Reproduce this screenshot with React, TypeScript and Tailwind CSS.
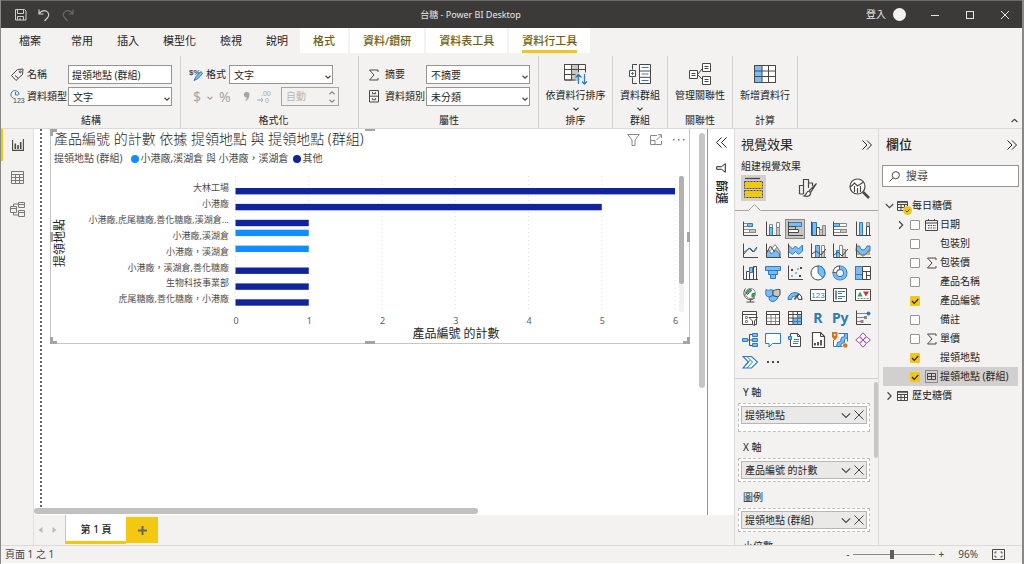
import React, { useId, useState } from "react";

const INK = "#4a4846";
const BLUE = "#2b7cc4";
const SKY = "#7dbcf0";

type SvgProps = { w?: number; h?: number; box?: string; children: React.ReactNode; className?: string };

function Svg({ w = 16, h = 16, box, children, className = "" }: SvgProps) {
  return (
    <svg
      width={w}
      height={h}
      viewBox={box ?? `0 0 ${w} ${h}`}
      fill="none"
      stroke={INK}
      strokeWidth="1"
      aria-hidden="true"
      className={`shrink-0 ${className}`}
    >
      {children}
    </svg>
  );
}

function Chevron({ className = "", w = 6, h = 4, stroke = INK }: { className?: string; w?: number; h?: number; stroke?: string }) {
  return (
    <svg width={w} height={h} viewBox="0 0 6 4" fill="none" stroke={stroke} strokeWidth="1.2" aria-hidden="true" className={`shrink-0 ${className}`}>
      <path vectorEffect="non-scaling-stroke" d="M.5 .7 3 3.1 5.5 .7" />
    </svg>
  );
}

/* ---------- title bar ---------- */

function TitleBar() {
  return (
    <header className="flex h-7 shrink-0 items-center justify-between border-t border-[#6a6a68] bg-[#3b3a38] text-[10px] text-[#e8e6e4]">
      <div className="flex items-center gap-[10px] pl-[13px]">
        <button aria-label="儲存">
          <Svg w={13} h={13}>
            <path stroke="#d0cecc" d="M1.5 1.5h9l1.500 1.500v9h-10.500zM3.500 1.500v4h6v-4M3.500 12v-3.500h6v3.500M6 10v2" />
          </Svg>
        </button>
        <button aria-label="復原">
          <Svg w={14} h={14}>
            <path stroke="#d0cecc" strokeWidth="1.2" d="M2 1.500v4.500h4.500M2 6C4 3 7 2 9.500 3.200c2.500 1.300 2.800 4.300 1.200 6.300L7.500 13" />
          </Svg>
        </button>
        <button aria-label="取消復原">
          <Svg w={14} h={14}>
            <path stroke="#6b6967" strokeWidth="1.2" d="M12 1.500v4.500H7.500M12 6C10 3 7 2 4.500 3.200c-2.500 1.300-2.800 4.300-1.200 6.300L6.500 13" />
          </Svg>
        </button>
      </div>
      <h1 className="text-[9px]">台糖 - Power BI Desktop</h1>
      <div className="flex items-center pr-3">
        <button className="flex items-center gap-[7px]">
          登入
          <span className="size-[13px] rounded-full bg-[#f3f2f1]" />
        </button>
        <button aria-label="最小化" className="ml-[24px]">
          <Svg w={10} h={10}>
            <path stroke="#e8e6e4" d="M1 5.500h8" />
          </Svg>
        </button>
        <button aria-label="最大化" className="ml-[25px]">
          <Svg w={10} h={10}>
            <rect x="1.500" y="1.500" width="7" height="7" stroke="#e8e6e4" />
          </Svg>
        </button>
        <button aria-label="關閉" className="ml-[25px]">
          <Svg w={10} h={10}>
            <path stroke="#e8e6e4" d="m1 1 8 8M9 1 1 9" />
          </Svg>
        </button>
      </div>
    </header>
  );
}

/* ---------- ribbon ---------- */

function RibbonTabs() {
  const plain = ["常用", "插入", "模型化", "檢視", "說明"];
  const context = ["格式", "資料/鑽研", "資料表工具", "資料行工具"];
  return (
    <nav className="flex h-[25px] shrink-0 text-[11px]">
      <button className="px-[18px] pt-[2px]">檔案</button>
      {plain.map((t) => (
        <button key={t} className="px-3 pt-[2px]">
          {t}
        </button>
      ))}
      <div className="flex gap-[2px]">
        {context.map((t, i) => (
          <button key={t} className="bg-white px-[13px] font-medium text-[#6f6010]">
            <span className={`flex h-full items-center border-b-3 border-t-4 border-t-transparent ${i === 3 ? "border-b-[#ebc91c]" : "border-b-transparent"}`}>{t}</span>
          </button>
        ))}
      </div>
    </nav>
  );
}

function Group({ title, className = "", children }: { title: string; className?: string; children: React.ReactNode }) {
  return (
    <section className={`mt-[3px] flex flex-col border-r border-[#d2d0ce] pt-[9px] ${className}`}>
      <div className="flex h-[53px] flex-col gap-[3px]">{children}</div>
      <h2 className="text-center leading-[15px]">{title}</h2>
    </section>
  );
}

function Select({ id, value, label, className = "" }: { id?: string; value: string; label?: string; className?: string }) {
  return (
    <span className={`relative flex h-[19px] ${className}`}>
      <select id={id} aria-label={label} className="w-full appearance-none rounded-none border border-[#979593] bg-white px-1 leading-none outline-none">
        <option>{value}</option>
      </select>
      <Chevron className="pointer-events-none absolute right-[2px] bottom-[5px]" />
    </span>
  );
}

function Field({ icon, label, labelClass, children }: { icon: React.ReactNode; label: string; labelClass: string; children: (id: string) => React.ReactNode }) {
  const id = useId();
  return (
    <div className="flex h-[19px] items-center">
      <span className="flex w-[17px] shrink-0">{icon}</span>
      <label htmlFor={id} className={`shrink-0 whitespace-nowrap ${labelClass}`}>
        {label}
      </label>
      {children(id)}
    </div>
  );
}

function BigButton({ icon, label, menu }: { icon: React.ReactNode; label: string; menu?: boolean }) {
  return (
    <button className="flex flex-col items-center whitespace-nowrap">
      <span className="-mt-[4px] flex h-[26px] items-center">{icon}</span>
      <span className="leading-[16px]">{label}</span>
      {menu && <Chevron className="mt-[4px]" />}
    </button>
  );
}

const TagIcon = (
  <Svg w={14} h={14}>
    <path d="M1.500 7.500 7.500 1.500l5.500-.5-.5 5.500L6 12.500z" />
    <circle cx="10.300" cy="3.800" r="1" />
    <path d="m5 7.500 3 2.500" />
  </Svg>
);
const TypeIcon = (
  <Svg w={15} h={15}>
    <path stroke={BLUE} d="M3.500 9.300A4 4 0 1 1 9 6M5.500 3v3h2.500" />
    <text x="3" y="13.500" fontSize="7" stroke="none" fill={INK} fontFamily="Liberation Sans, sans-serif">123</text>
  </Svg>
);
const FormatIcon = (
  <Svg w={15} h={15}>
    <text x="0" y="7.500" fontSize="8" fontWeight="700" stroke="none" fill={INK} fontFamily="Liberation Sans, sans-serif">$%</text>
    <path stroke={BLUE} fill={SKY} d="M12 4.500 7 9.500l-2 4 4-2 4.500-5z" />
  </Svg>
);
const SigmaIcon = (
  <Svg w={12} h={12}>
    <path d="M10 3v-2H1.500l4.500 5-4.500 5h8.500V9" />
  </Svg>
);
const CabinetIcon = (
  <Svg w={11} h={13}>
    <path d="M1.500.5h9v11.500h-9zM1.500 6.200h9M4.500 2.200v1.500h3v-1.500M4.500 8.200v1.500h3v-1.500" />
  </Svg>
);
const SortIcon = (
  <Svg w={25} h={24}>
    <path fill="#c8c6c4" stroke="none" d="M8 2h7v17H8z" />
    <path fill="#fff" d="M1.500 2.500h7v15.500h-7z" />
    <path d="M1.500 2.500h21v8M1.500 2.500v15.500h11M8.500 2.500v15.500M15.500 2.500v8M1.500 7.500h21M1.500 12.500h11" />
    <path stroke={BLUE} strokeWidth="1.300" d="M15.500 22v-9.500m-3 3 3-3 3 3M21.500 12v10m-2.500-2.500 2.500 2.500 2.500-2.500" />
  </Svg>
);
const GroupIcon = (
  <Svg w={24} h={22}>
    <path d="M9 1.500H4.500v5M9 20.500H4.500v-6" />
    <path fill="#fff" d="M11.500 1.500h11v19h-11zM11.500 8h11M11.500 14.300h11M1.500 7.500h6v6h-6z" />
    <path stroke={BLUE} d="M13.500 4.500h7M13.500 11h7M13.500 17.500h7M3 10.500h3M4.500 9v3" />
  </Svg>
);
const RelationIcon = (
  <Svg w={24} h={24}>
    <path fill="#fff" d="M1.500 8.500h8v8h-8zM14.500 1.500h8v8h-8zM14.500 14.500h8v8h-8z" />
    <path d="M3.500 11.500h4M3.500 13.500h4M16.500 4.500h4M16.500 6.500h4M16.500 17.500h4M16.500 19.500h4M9.500 12.500l5-6M9.500 12.500l5 5" />
  </Svg>
);
const NewColumnIcon = (
  <Svg w={24} h={20}>
    <path fill="#fff" d="M1.500 1.500h21v17h-21z" />
    <path fill={SKY} stroke="none" d="M2 2h7v16H2z" />
    <path d="M1.500 1.500h21v17h-21zM9 1.500v17M15.500 1.500v17M1.500 7h21M1.500 12.500h21" />
  </Svg>
);

function Ribbon() {
  return (
    <div className="flex h-[76px] shrink-0 overflow-hidden border-b border-[#dcdad8] text-[10px]">
      <Group title="結構" className="w-[180px] pr-2 pl-[9px]">
        <Field icon={TagIcon} label="名稱" labelClass="w-[41px]">
          {(id) => <input id={id} defaultValue="提領地點 (群組)" className="h-[19px] w-[104px] border border-[#979593] bg-white px-[3px] outline-none" />}
        </Field>
        <Field icon={TypeIcon} label="資料類型" labelClass="w-[41px]">
          {(id) => <Select id={id} value="文字" className="w-[104px]" />}
        </Field>
      </Group>

      <Group title="格式化" className="w-[178px] pl-2">
        <Field icon={FormatIcon} label="格式" labelClass="w-[23px]">
          {(id) => <Select id={id} value="文字" className="w-[104px]" />}
        </Field>
        <div className="flex h-[19px] items-center text-[14px] text-[#a8a6a4]">
          <button className="ml-1 flex w-[22px] items-center gap-[6px]">
            $<Chevron stroke="#a8a6a4" className="mt-[3px]" />
          </button>
          <button className="ml-1 w-[24px] text-left">%</button>
          <button aria-label="千分位分隔符號" className="flex w-[14px]">
            <Svg w={7} h={11}>
              <path stroke="none" fill="#a8a6a4" d="M3.500 1a2.500 2.500 0 0 1 3 2.700C6.500 7 4.500 9.500 1.500 10.500c1.500-1.500 2.200-2.800 2.200-4A2.700 2.700 0 1 1 3.500 1" />
            </Svg>
          </button>
          <button aria-label="小數位數" className="flex w-[24px]">
            <Svg w={14} h={14}>
              <text x="4" y="6" fontSize="7" stroke="none" fill="#a8a6a4" fontFamily="Liberation Sans, sans-serif">.00</text>
              <text x="8" y="13" fontSize="7" stroke="none" fill="#a8a6a4" fontFamily="Liberation Sans, sans-serif">0</text>
              <path stroke="#86b4dc" d="M0 10h6M4 8l2 2-2 2" />
            </Svg>
          </button>
          <span className="flex h-[19px] w-[58px] items-center border border-[#a8a6a4] text-[10px]">
            <input aria-label="小數位數" disabled defaultValue="自動" className="w-full min-w-0 pl-1 text-[#b8b6b4]" />
            <span className="mr-[3px] flex flex-col gap-[4px]">
              <Chevron stroke="#8a8886" className="rotate-180" />
              <Chevron stroke="#8a8886" />
            </span>
          </span>
        </div>
      </Group>

      <Group title="屬性" className="w-[180px] pr-2 pl-[9px]">
        <Field icon={SigmaIcon} label="摘要" labelClass="w-[41px]">
          {(id) => <Select id={id} value="不摘要" className="w-[105px]" />}
        </Field>
        <Field icon={CabinetIcon} label="資料類別" labelClass="w-[41px]">
          {(id) => <Select id={id} value="未分類" className="w-[105px]" />}
        </Field>
      </Group>

      <Group title="排序" className="w-[74px]">
        <BigButton icon={SortIcon} label="依資料行排序" menu />
      </Group>
      <Group title="群組" className="w-[55px]">
        <BigButton icon={GroupIcon} label="資料群組" menu />
      </Group>
      <Group title="關聯性" className="w-[65px]">
        <BigButton icon={RelationIcon} label="管理關聯性" />
      </Group>
      <Group title="計算" className="w-[65px]">
        <BigButton icon={NewColumnIcon} label="新增資料行" />
      </Group>
      <button aria-label="摺疊功能區" className="mt-auto mr-1 mb-[5px] ml-auto">
        <Chevron w={7} h={5} className="rotate-180" />
      </button>
    </div>
  );
}

/* ---------- left rail ---------- */

function Rail() {
  return (
    <nav className="flex w-[33px] shrink-0 flex-col border-r border-[#e1dfdd]">
      <button aria-label="報表" className="flex h-[32px] items-center border-l-2 border-[#f2c811] pl-[9px]">
        <Svg w={12} h={12}>
          <path strokeWidth="1.100" d="M.6 1v10.400h10.800V0" />
          <path strokeWidth="1.600" d="M3.300 4.500v5.500M6 6v4M8.700 3v7" />
        </Svg>
      </button>
      <button aria-label="資料" className="flex h-[32px] items-center pl-[10px]">
        <Svg w={13} h={13}>
          <path d="M.5.5h12v12H.5zM.5 3.500h12M.5 6.500h12M.5 9.500h12M4.500 3.500v9M8.500 3.500v9" stroke="#7a7876" />
        </Svg>
      </button>
      <button aria-label="模型" className="flex h-[32px] items-center pl-[9px]">
        <Svg w={15} h={15}>
          <path stroke="#7a7876" d="M.5 4.500h6v6h-6zM.5 6.500h6M8.500.5h6v5h-6zM8.500 2.500h6M8.500 8.500h6v6h-6zM8.500 10.500h6M3.500 4.500v-2.500h5M3.500 10.500v2.500h5" />
        </Svg>
      </button>
    </nav>
  );
}

/* ---------- report visual ---------- */

const NAVY = "#12239e";
const AZURE = "#118dff";
const rows = [
  { label: "大林工場", value: 6, group: 1 },
  { label: "小港廠", value: 5, group: 1 },
  { label: "小港廠,虎尾糖廠,善化糖廠,溪湖倉...", value: 1, group: 1 },
  { label: "小港廠,溪湖倉", value: 1, group: 0 },
  { label: "小港廠，溪湖倉", value: 1, group: 0 },
  { label: "小港廠，溪湖倉,善化糖廠", value: 1, group: 1 },
  { label: "生物科技事業部", value: 1, group: 1 },
  { label: "虎尾糖廠,善化糖廠，小港廠", value: 1, group: 1 },
];
const UNIT = 73.25;

function BarChart() {
  return (
    <svg viewBox="0 0 638 174" className="block w-full" role="img" aria-label="產品編號 的計數">
      {[0, 1, 2, 3, 4, 5, 6].map((n) => (
        <g key={n}>
          <line x1={184.500 + n * UNIT} x2={184.500 + n * UNIT} y1="9" y2="144" stroke="#dedede" strokeDasharray="1 3" />
          <text x={185 + n * UNIT} y="157" textAnchor="middle" fontSize="9" fill="#605e5c">
            {n}
          </text>
        </g>
      ))}
      {rows.map((r, i) => (
        <g key={r.label}>
          <text x="178" y={24 + i * 15.900} textAnchor="end" fontSize="9" fill="#4e4c4a">
            {r.label}
          </text>
          <rect x="184.500" y={(r.group ? 21 : 15) + i * 15.900} width={r.value * UNIT} height="6.400" fill={r.group ? NAVY : AZURE} />
        </g>
      ))}
      <rect x="628" y="9" width="5" height="136" rx="2" fill="#f1f0ef" />
      <rect x="628" y="9" width="5" height="108" rx="2" fill="#b3b2b1" />
      <text x="405" y="171" textAnchor="middle" fontSize="12" fill="#252423">
        產品編號 的計數
      </text>
      <text transform="translate(13 76) rotate(-90)" textAnchor="middle" fontSize="12" fill="#252423">
        提領地點
      </text>
    </svg>
  );
}

function Visual() {
  return (
    <article className="relative ml-[8px] w-[640px] border border-t-0 border-[#c8c6c4] pb-[2px]">
      <span className="absolute top-0 -left-px size-[7px] border-t-3 border-l-3 border-[#a6a4a2]" />
      <span className="absolute top-0 left-1/2 h-[2px] w-[10px] -translate-x-1/2 bg-[#a6a4a2]" />
      <span className="absolute -bottom-px left-1/2 h-[3px] w-[10px] -translate-x-1/2 bg-[#a6a4a2]" />
      <span className="absolute -bottom-px -left-px size-[7px] border-b-3 border-l-3 border-[#a6a4a2]" />
      <span className="absolute -right-px -bottom-px size-[7px] border-r-3 border-b-3 border-[#a6a4a2]" />
      <span className="absolute top-[103px] -left-px h-[10px] w-[3px] bg-[#a6a4a2]" />
      <span className="absolute top-[103px] -right-px h-[10px] w-[3px] bg-[#a6a4a2]" />
      <div className="flex h-[20px] items-start justify-between pr-1 pl-[3px]">
        <h2 className="text-[14px] leading-[19px] font-light text-[#252423]">產品編號 的計數 依據 提領地點 與 提領地點 (群組)</h2>
        <div className="flex items-center gap-[10px] pt-[5px]">
          <button aria-label="篩選">
            <Svg w={13} h={12}>
              <path stroke="#8a8886" d="M.7.5h11.600L8 6v5.500H5V6z" />
            </Svg>
          </button>
          <button aria-label="焦點模式">
            <Svg w={12} h={12}>
              <path stroke="#8a8886" d="M7 1.500H.5v9h11V7M.5 6.500h4.500v4M6.500 6l5-5M8 .7h3.500v3.500" />
            </Svg>
          </button>
          <button aria-label="更多選項">
            <Svg w={13} h={12}>
              <path stroke="none" fill="#7a7876" d="M1 5h1.500v1.500H1zM6 5h1.500v1.500H6zM11 5h1.500v1.500H11z" />
            </Svg>
          </button>
        </div>
      </div>
      <div className="flex h-[18px] items-center pt-px pl-[3px] text-[10px] text-[#4e4c4a]">
        <span className="mr-2">提領地點 (群組)</span>
        <span className="mr-[2px] size-2 rounded-full bg-[#118dff]" />
        <span className="mr-1">小港廠,溪湖倉 與 小港廠，溪湖倉</span>
        <span className="mr-[2px] size-2 rounded-full bg-[#12239e]" />
        <span>其他</span>
      </div>
      <BarChart />
    </article>
  );
}

function Canvas() {
  return (
    <div className="flex min-h-0 flex-1 bg-white">
      <main className="flex min-w-0 flex-1 flex-col">
        <div className="flex min-h-0 flex-1">
          <div className="min-w-0 flex-1 overflow-hidden pl-[6px]">
            <div className="h-full overflow-hidden border-l-2 border-dotted border-[#6a6866]">
              <Visual />
            </div>
          </div>
          <div className="w-[8px] shrink-0 pt-[4px]">
            <div className="h-[255px] w-[6px] rounded-full bg-[#c8c6c4]" />
          </div>
        </div>
        <div className="h-[8px] shrink-0 pt-px">
          <div className="h-[6px] w-[66%] rounded-full bg-[#c2c0be]" />
        </div>
      </main>
      <aside className="flex w-[27px] shrink-0 flex-col items-center border-l border-[#979593] pt-[8px]">
        <button aria-label="展開窗格">
          <Svg w={11} h={11}>
            <path stroke="#252423" d="M5.500.5l-5 5 5 5M10.500.5l-5 5 5 5" />
          </Svg>
        </button>
        <Svg w={10} h={10} className="mt-[15px]">
          <path stroke="#252423" d="M9.300.7v8.600L5.500 6.300H.7V3.700h4.800z" />
        </Svg>
        <h2 className="mt-[7px] text-[12px] leading-[16px] font-medium [text-orientation:sideways] [writing-mode:vertical-rl]">篩選</h2>
      </aside>
    </div>
  );
}

function PageTabs() {
  return (
    <div className="flex h-[30px] shrink-0 text-[10px]">
      <div className="flex w-[31px] items-center justify-around pr-1">
        <button aria-label="上一頁">
          <Svg w={5} h={6}>
            <path stroke="none" fill="#bdbbb9" d="M4.500 0v6L.5 3z" />
          </Svg>
        </button>
        <button aria-label="下一頁">
          <Svg w={5} h={6}>
            <path stroke="none" fill="#bdbbb9" d="M.5 0v6l4-3z" />
          </Svg>
        </button>
      </div>
      <button className="mb-px w-[61px] border-b-3 border-l border-b-[#f2c811] border-l-[#c8c6c4] bg-white pt-[2px] font-medium">第 1 頁</button>
      <button aria-label="新增頁面" className="mt-[2px] mb-[2px] flex w-[32px] items-center justify-center bg-[#f2c811]">
        <Svg w={9} h={9}>
          <path stroke="#66655f" strokeWidth="2" d="M4.500 0v9M0 4.500h9" />
        </Svg>
      </button>
    </div>
  );
}

/* ---------- visualizations pane ---------- */

function Axes() {
  return <path d="M1.500.5v14H16" />;
}

const GREY = "#c8c6c4";
const MID = "#8a8886";
const textIcon = "text-[14px] leading-[16px] font-bold text-[#2b7cb4]";

const visuals: { name: string; art: React.ReactNode }[] = [
  { name: "堆疊橫條圖", art: <Svg><path fill="#fff" stroke={MID} d="M1.500 8.500h12v3h-12z" /><path fill={GREY} stroke={MID} d="M7.500 8.500h6v3h-6z" /><path fill={SKY} stroke={BLUE} d="M5.500 2.500h5v3h-5z" /><path stroke={MID} d="M1.500 2.500h4M1.500 5.500h4" /><Axes /></Svg> },
  { name: "堆疊直條圖", art: <Svg><path fill="#fff" stroke={MID} d="M4.500 3.500h3v11h-3zM11.500 1.500h3v13h-3z" /><path fill={GREY} stroke={MID} d="M11.500 6.500h3v8h-3z" /><path fill={SKY} stroke={BLUE} d="M4.500 6.500h3v8h-3z" /><Axes /></Svg> },
  { name: "群組橫條圖", art: <Svg><path fill={SKY} stroke={BLUE} d="M1.500 1.500h13v4h-13z" /><path fill={GREY} d="M1.500 5.500h7v3h-7z" /><path fill="#fff" d="M1.500 8.500h10v3h-10z" /><Axes /></Svg> },
  { name: "群組直條圖", art: <Svg><path fill={SKY} stroke={BLUE} d="M2.500 1.500h4v13h-4z" /><path fill="#fff" d="M6.500 6.500h3v8h-3z" /><path fill={GREY} stroke={MID} d="M9.500 8.500h3v6h-3zM12.500 4.500h3v10h-3z" /><Axes /></Svg> },
  { name: "100% 堆疊橫條圖", art: <Svg><path fill="#fff" stroke={MID} d="M1.500 2.500h13v3h-13z" /><path fill={SKY} stroke={BLUE} d="M1.500 2.500h6v3h-6z" /><path fill="#fff" stroke={MID} d="M1.500 8.500h13v3h-13z" /><path fill={GREY} stroke={MID} d="M8.500 8.500h6v3h-6z" /><Axes /></Svg> },
  { name: "100% 堆疊直條圖", art: <Svg><path fill={SKY} stroke={BLUE} d="M4.500 1.500h3v13h-3z" /><path fill={GREY} stroke={MID} d="M11.500 1.500h3v4h-3z" /><path fill="#fff" stroke={INK} d="M11.500 5.500h3v9h-3z" /><Axes /></Svg> },

  { name: "折線圖", art: <Svg><path d="m2 11 5-6 4 4 4-5" /><path stroke={BLUE} d="m2 9 3-2 3-2 4 4 3-4" /><Axes /></Svg> },
  { name: "區域圖", art: <Svg><path fill="#fff" stroke={MID} d="m5 8 5-6.500 5 7v6H2z" /><path fill={GREY} stroke={MID} d="m9 8 3-4 3 5v5.500h-4z" /><path fill={SKY} stroke={BLUE} d="m1.500 9 2-2 3 4 4-4 4 4v3.500h-13z" /><path d="m1.500 10 4-7 4 6" /><Axes /></Svg> },
  { name: "堆疊區域圖", art: <Svg><path fill={SKY} stroke={BLUE} d="m1.500 2 4 4 3-3 3 3 4-4v6l-4 3.500-3-3-3 3-4-3z" /><Axes /></Svg> },
  { name: "折線與堆疊直條圖", art: <Svg><path fill="#fff" stroke={MID} d="M11.500 2.500h3v12h-3z" /><path fill={SKY} stroke={BLUE} d="M5.500 2.500h4v12h-4z" /><path fill={GREY} stroke={MID} d="M11.500 8.500h3v6h-3z" /><path d="m2 11 4-3 5 4 5-6" /><Axes /></Svg> },
  { name: "折線與群組直條圖", art: <Svg><path fill={SKY} stroke={BLUE} d="M4.500 7.500h3v7h-3z" /><path fill="#fff" stroke={MID} d="M7.500 2.500h3v12h-3z" /><path fill={GREY} stroke={MID} d="M10.500 6.500h3v8h-3z" /><path d="m2 12 4-3 4 4 6-7" /><Axes /></Svg> },
  { name: "緞帶圖", art: <Svg><path fill="#e8a34a" stroke="none" d="M2 8h3l3 3 3-3h4v4h-4l-3 2-3-2H2z" /><path fill={SKY} stroke={BLUE} d="M1.500 3h3c1 3 2 4 3.500 4s2.500-1 4-4h3v5h-2c-1.500 3-3 4-5 4s-3.500-1-5-4h-2z" /><Axes /></Svg> },

  { name: "瀑布圖", art: <Svg><path fill="#fff" stroke={INK} d="M4.500 6.500h3v8h-3zM11.500 1.500h3v13h-3z" /><path fill={SKY} stroke={BLUE} d="M7.500 2.500h3v5h-3z" /><path d="M10.500 2.500h2" /><Axes /></Svg> },
  { name: "漏斗圖", art: <Svg><path fill={SKY} stroke={BLUE} d="M.5 1.500h15v4H.5zM3.500 5.500h9v4h-9zM5.500 9.500h5v4h-5z" /></Svg> },
  { name: "散佈圖", art: <Svg><Axes /><path stroke="none" fill={SKY} d="M4 10h2v2H4zM8 7h2v2H8zM10 3h2v2h-2z" /><path stroke="none" fill={INK} d="M4 4h2v2H4zM12 10h2v2h-2zM13 2h2v2h-2z" /></Svg> },
  { name: "圓形圖", art: <Svg><circle cx="8" cy="8" r="7" fill="#fff" stroke={INK} /><path fill={SKY} stroke={BLUE} d="M8 1v7l4.800 5A7 7 0 0 0 8 1" /></Svg> },
  { name: "環圈圖", art: <Svg><circle cx="8" cy="8" r="5.300" stroke={BLUE} strokeWidth="4.500" /><circle cx="8" cy="8" r="5.300" stroke={SKY} strokeWidth="2.800" /><path stroke="#5c5a58" strokeWidth="4.500" d="M2.700 8A5.300 5.300 0 0 1 8 2.700" /><path stroke="#fff" strokeWidth="2.600" d="M2.800 7A5.300 5.300 0 0 1 7 2.800" /></Svg> },
  { name: "樹狀圖", art: <Svg><path fill="#fff" d="M.5 1.500h15v13H.5z" /><path fill={SKY} stroke={BLUE} d="M.5 1.500h7v13h-7z" /><path stroke={BLUE} d="M.5 9.500h7" /><path d="M7.500 1.500v13M7.500 6.500h8M11.500 6.500v8M11.500 10.500h4" /></Svg> },

  { name: "地圖", art: <Svg><circle cx="8.500" cy="6.500" r="5" fill="#fff" stroke={MID} /><path fill="#5aa878" stroke="#2f7d4f" d="M5.500 3.500 8.500 2l1 2-2 1.500-2 2-1.300-1.500zM10 7l2.500-1-.5 3-2 1z" /><path d="M3.500 1.500C1 5 1.500 9 4.500 11.500c3 2 6 1.500 8.500-1M8.500 12.500V15M4.500 15h8" /></Svg> },
  { name: "區域分布圖", art: <Svg><path fill={SKY} stroke={BLUE} d="M1 2.500c2 1 3 1 5 0l2 1v5l-4 1.500-2.500-1C.5 7 .5 5 1 2.500zM4 10l4-1.500 5 1.500c-1 3-3 4.500-6 4.500-2 0-3-2-3-4.500z" /><path fill={GREY} stroke={INK} d="M8 3.500c2 0 3-1.500 7-1v5c-1 1-1 2-2 2.500L8 8.500z" /></Svg> },
  { name: "量測計", art: <Svg><path fill={SKY} stroke={BLUE} d="M1 12.500a7 7 0 0 1 14 0h-3.500a3.500 3.500 0 0 0-7 0z" /><path fill="#fff" stroke={INK} d="M12 6.800a7 7 0 0 1 3 5.700h-3.500a4 4 0 0 0-1.200-2.700z" /><path strokeWidth="1.500" d="m7.500 12.500 3.500-5" /></Svg> },
  { name: "卡片", art: <Svg><path fill="#fff" d="M.5 2.500h15v11H.5z" /><text x="8" y="10.500" fontSize="8" textAnchor="middle" stroke="none" fill={BLUE} fontFamily="Liberation Sans, sans-serif">123</text></Svg> },
  { name: "多列卡片", art: <Svg><path fill="#fff" d="M1.500 1.500h13v13h-13z" /><path stroke={BLUE} d="M6 4.500h7M6 6.500h4M6 9.500h7M6 11.500h4" /><path d="M4 3.500v9" strokeWidth="1.300" /></Svg> },
  { name: "KPI", art: <Svg><path fill="#fff" d="M.5 2.500h15v11H.5z" /><path stroke="none" fill="#3f9f5f" d="m5 4.500 2.700 5H2.300z" /><path stroke="none" fill="#d13438" d="M8 4.500h6l-3 5z" /><path stroke={MID} d="M2.500 11.500h11" strokeDasharray="2 1" /></Svg> },

  { name: "交叉分析篩選器", art: <Svg><path fill="#fff" d="M.5 1.500h14v13H.5z" /><path d="M.5 4.500h14" /><path stroke={MID} d="M3.500 6.500h2v2h-2zM3.500 10.500h2v2h-2z" /><path fill="#fff" d="M7 7.500h8.500L12.500 11v4.500l-2-1V11z" /></Svg> },
  { name: "資料表", art: <Svg><path fill="#fff" d="M1.500 1.500h13v13h-13z" /><path stroke={MID} d="M1.500 8h13M1.500 11.500h13M6 4.500v10M10.500 4.500v10" /><path d="M1.500 1.500h13v13h-13zM1.500 4.500h13" /></Svg> },
  { name: "矩陣", art: <Svg><path fill="#fff" d="M1.500 1.500h13v13h-13z" /><path fill={SKY} stroke="none" d="M6 8h4.500v6.500H6zM10.500 4.500h4v10h-4z" /><path d="M1.500 1.500h13v13h-13zM1.500 4.500h13M1.500 8h13M1.500 11.500h13M6 1.500v13M10.500 1.500v13" /><path stroke={BLUE} d="M6 11.500h8.500M10.500 4.500v10" /></Svg> },
  { name: "R 指令碼視覺效果", art: <span className={textIcon}>R</span> },
  { name: "Python 視覺效果", art: <span className={textIcon}>Py</span> },
  { name: "關鍵影響因數", art: <Svg><Axes /><path stroke={MID} d="M2 3.500h10M2 7.500h8M2 11.500h4" /><circle cx="13.500" cy="3.500" r="2" fill={BLUE} stroke="none" /><path stroke="none" fill={MID} d="M9 6h3v3H9zM5.500 10h3v3h-3z" /></Svg> },

  { name: "分解樹", art: <Svg><path stroke={INK} d="M5 8h5M7.500 2.500v11M7.500 2.500h3M7.500 13.500h3" /><path fill={SKY} stroke={BLUE} d="M.5 6.500h5v3h-5zM10.500 1.500h5v3h-5zM10.500 6.500h5v3h-5zM10.500 11.500h5v3h-5z" /></Svg> },
  { name: "問與答", art: <Svg><path fill="#fff" stroke={BLUE} d="M.5 1.500h15v10H7.500L4 15v-3.500H.5z" /></Svg> },
  { name: "智慧敘述", art: <Svg><path fill="#fff" d="M3.500 1.500h7l3 3v10h-10z" /><path d="M10.500 1.500v3h3" /><path stroke={BLUE} d="M7 7.500h5M6 11.500h5" /><path stroke={MID} d="M6 9.500h6" /><path fill={SKY} stroke={BLUE} d="M1.500 4.500h3v3h-3z" /></Svg> },
  { name: "編頁報表", art: <Svg><path fill="#fff" strokeWidth="1.200" d="M2.500.5h8l4 4v11h-12z" /><path d="M10.500.5v4h4" /><path strokeWidth="1.800" d="M5 13.500v-2.500M8 13.500v-3.500M11 13.500V8" /></Svg> },
  { name: "ArcGIS Maps", art: <Svg><path fill="#fff" stroke={BLUE} d="M6.500 1.500h9v8M1.500 8v6.500h9" /><path fill={SKY} stroke={BLUE} d="m4.500 14.500 1-4 3-1 1-4 3-1v-3h3v4l-3 2v3l-3 1-1 3z" /><path fill="#d8701e" stroke="none" d="M0 0h5.500v5L2.800 8.500 0 5z" /><circle cx="13.300" cy="13.500" r="2.200" fill="#d8701e" stroke="none" /><circle cx="2.800" cy="2.800" r="1" fill="#fff" stroke="none" /></Svg> },
  { name: "Power Apps", art: <Svg><g stroke="#a04cb0" fill="#fff"><path d="M5 4.500 7 1.500q1-1 2 0l2 3L8 8zM4.500 5 8 8l-3.500 3-3-2q-1-1 0-2zM11.500 5 8 8l3.500 3 3-2q1-1 0-2zM5 11.500 8 8l3 3.500-2 3q-1 1-2 0z" /></g></Svg> },

  { name: "Power Automate", art: <Svg><path fill="#fff" stroke={BLUE} strokeWidth="1.200" d="M1 2.500h8.500l6 5.500-6 6H1l5.500-6z" /><path stroke={BLUE} d="m5 2.500 5.500 5.500L5 14M3.500 11l5-5" /></Svg> },
  { name: "取得更多視覺效果", art: <Svg><path stroke="none" fill={INK} d="M2 7h2v2H2zM7 7h2v2H7zM12 7h2v2h-2z" /></Svg> },
];

function CollapseIcon() {
  return (
    <Svg w={10} h={10}>
      <path stroke="#252423" d="m.5.5 4.500 4.500L.5 9.500M5 .5 9.500 5 5 9.500" />
    </Svg>
  );
}

function Well({ title, value, className, tall }: { title: string; value: string; className: string; tall?: boolean }) {
  return (
    <section className={className}>
      <h3 className="pl-[6px] leading-[14px]">{title}</h3>
      <div className={`mt-[4px] mr-[4px] ml-[1px] border border-dashed border-[#c0bebc] bg-white p-[2px] ${tall ? "pb-[7px]" : ""}`}>
        <div className="flex h-[18px] items-center border border-[#b8b6b4] bg-[#eae9e8] pr-[2px] pl-[3px]">
          <span className="min-w-0 flex-1 truncate">{value}</span>
          <button aria-label={`${value} 選項`} className="px-[3px]">
            <Chevron w={10} h={7} />
          </button>
          <button aria-label={`移除 ${value}`}>
            <Svg w={10} h={10}>
              <path d="m.5.5 9 9M9.500.5l-9 9" />
            </Svg>
          </button>
        </div>
      </div>
    </section>
  );
}

function VisualPane() {
  const [picked, setPicked] = useState("群組橫條圖");
  return (
    <aside className="flex w-[145px] shrink-0 flex-col overflow-hidden border-x border-[#dcdad8] text-[10px]">
      <div className="flex h-[28px] shrink-0 items-center justify-between pt-[3px] pr-[6px] pl-[6px]">
        <h2 className="text-[13px]">視覺效果</h2>
        <button aria-label="摺疊窗格">
          <CollapseIcon />
        </button>
      </div>
      <p className="shrink-0 pt-[2px] pl-[6px] leading-[14px]">組建視覺效果</p>
      <div className="flex shrink-0 items-center justify-between pt-[2px] pr-[8px] pl-[6px]">
        <button aria-label="組建" className="bg-[#d2d0ce] p-[1px]">
          <Svg w={23} h={24}>
            <path d="M3 2.500h15" strokeWidth="1.300" />
            <path fill="#f2c811" strokeDasharray="2 1" d="M2.500 5.500h18v7h-18zM2.500 14.500h18v7h-18z" />
          </Svg>
        </button>
        <button aria-label="格式">
          <Svg w={20} h={20}>
            <path strokeWidth="1.200" d="M1.500 16V7.500h4V16M5.500 9V1.500h5V10M10.500 5h4v3M1.500 16h4" />
            <path fill="#fff" strokeWidth="1.200" d="M18.500 5.500 11 13l1.500 1.500zM11 13c-3 0-2 4-5 5 3 1 7 0 6.500-3.500z" />
          </Svg>
        </button>
        <button aria-label="分析">
          <Svg w={21} h={21}>
            <circle cx="8.500" cy="8.500" r="7.500" fill="#fff" strokeWidth="1.200" />
            <path d="m1.500 9 4-4 3 3 6-4M5.500 8v6M8.500 10v5M11.500 8v6" strokeWidth="1.200" />
            <path strokeWidth="2.500" d="m14 14 6 6" />
          </Svg>
        </button>
      </div>
      <Svg w={143} h={11} className="w-full">
        <path stroke="#a8a6a4" d="M0 9.500h13.500l6-6 6 6H143" />
      </Svg>
      <div className="mx-[4px] mt-[5px] grid h-[156px] shrink-0 grid-cols-6 grid-rows-7 pt-px">
        {visuals.map((v) => (
          <button
            key={v.name}
            aria-label={v.name}
            aria-pressed={picked === v.name}
            onClick={() => setPicked(v.name)}
            className={`flex size-[20px] items-center justify-center place-self-center border ${picked === v.name ? "border-[#8a8886] bg-[#c8c6c4]" : "border-transparent"}`}
          >
            {v.art}
          </button>
        ))}
      </div>
      <div className="mt-[5px] flex min-h-0 flex-1 border-t border-[#d2d0ce]">
        <div className="min-w-0 flex-1 overflow-hidden pl-[2px]">
          <Well title="Y 軸" value="提領地點" className="pt-[6px]" tall />
          <Well title="X 軸" value="產品編號 的計數" className="pt-[8px]" />
          <Well title="圖例" value="提領地點 (群組)" className="pt-[8px]" />
          <h3 className="pt-[7px] pl-[6px] leading-[14px]">小倍數</h3>
        </div>
        <div className="mt-[3px] h-[76px] w-[4px] shrink-0 rounded-full bg-[#c8c6c4]" />
      </div>
    </aside>
  );
}

/* ---------- fields pane ---------- */

function TableIcon() {
  return (
    <Svg w={11} h={10}>
      <path d="M.5.5h10v9H.5zM.5 3.500h10M.5 6.500h10M4 3.500v6M7.500 3.500v6" />
      <path d="M.5 1h10" strokeWidth="1.500" />
    </Svg>
  );
}

const CalendarIcon = (
  <Svg w={13} h={12}>
    <path d="M.5 1.500h12v10H.5zM.5 4h12M3.500 0v2M9.500 0v2" />
    <path d="M3 6.500h8M3 9h8" strokeWidth="1.200" strokeDasharray="1.500 1" />
  </Svg>
);
const GroupedIcon = (
  <Svg w={13} h={13}>
    <path strokeDasharray="1 1" d="M.5.5h12v12H.5z" />
    <path d="M2.500 3.500h8v6h-8zM2.500 6.500h8M6.500 3.500v6" />
  </Svg>
);

const fields: { name: string; on?: boolean; icon?: React.ReactNode; expand?: boolean; selected?: boolean }[] = [
  { name: "日期", icon: CalendarIcon, expand: true },
  { name: "包裝別" },
  { name: "包裝價", icon: SigmaIcon },
  { name: "產品名稱" },
  { name: "產品編號", on: true },
  { name: "備註" },
  { name: "單價", icon: SigmaIcon },
  { name: "提領地點", on: true },
  { name: "提領地點 (群組)", on: true, icon: GroupedIcon, selected: true },
];

function FieldRow({ name, on, icon, expand, selected }: (typeof fields)[number]) {
  const id = useId();
  return (
    <li className={`mx-[4px] flex h-[19px] items-center ${selected ? "bg-[#d2d0ce]" : ""}`}>
      <span className="flex w-[27px] shrink-0 justify-center">
        {expand && <Chevron w={10} h={6} className="ml-[8px] -rotate-90" />}
      </span>
      <span className="grid shrink-0 *:col-start-1 *:row-start-1">
        <input
          id={id}
          type="checkbox"
          defaultChecked={on}
          className="peer size-[10px] appearance-none rounded-[1px] border border-[#979593] bg-white checked:border-[#f2c811] checked:bg-[#f2c811]"
        />
        <Svg w={10} h={10} className="pointer-events-none hidden peer-checked:block">
          <path strokeWidth="1.200" stroke="#252423" d="m2 5 2.200 2.300L8.300 3" />
        </Svg>
      </span>
      <span className="ml-[3px] flex w-[17px] shrink-0 justify-center">{icon}</span>
      <label htmlFor={id} className="whitespace-nowrap">
        {name}
      </label>
    </li>
  );
}

function FieldsPane() {
  return (
    <aside className="flex w-[143px] shrink-0 flex-col overflow-hidden text-[10px]">
      <div className="flex h-[28px] items-center justify-between pt-[3px] pr-[5px] pl-[7px]">
        <h2 className="text-[13px] font-medium">欄位</h2>
        <button aria-label="摺疊窗格">
          <CollapseIcon />
        </button>
      </div>
      <label className="mx-[3px] mt-[8px] flex h-[22px] items-center gap-[6px] border border-[#979593] bg-white pl-[6px]">
        <Svg w={11} h={11}>
          <circle cx="6.800" cy="4.200" r="3.600" />
          <path d="M4.200 6.800.5 10.500" />
        </Svg>
        <input type="search" placeholder="搜尋" aria-label="搜尋" className="w-full min-w-0 text-[11px] outline-none placeholder:text-[#484644]" />
      </label>
      <ul className="pt-[9px]">
        <li>
          <button className="flex h-[19px] items-center pl-[6px]">
            <Chevron w={9} h={6} />
            <span className="relative mr-[4px] ml-[3px]">
              <TableIcon />
              <Svg w={9} h={9} className="absolute top-[5px] left-[6px]">
                <circle cx="4.500" cy="4.500" r="4.500" stroke="none" fill="#f2c811" />
                <path d="m2.500 4.500 1.500 1.500 2.500-2.500" />
              </Svg>
            </span>
            每日糖價
          </button>
          <ul>
            {fields.map((f) => (
              <FieldRow key={f.name} {...f} />
            ))}
          </ul>
        </li>
        <li>
          <button className="flex h-[19px] items-center pl-[6px]">
            <Chevron w={9} h={6} className="-rotate-90" />
            <span className="mr-[4px] ml-[3px]">
              <TableIcon />
            </span>
            歷史糖價
          </button>
        </li>
      </ul>
    </aside>
  );
}

/* ---------- status bar ---------- */

function StatusBar() {
  return (
    <footer className="flex h-[19px] shrink-0 items-center border-t border-b border-t-[#dcdad8] border-b-white pr-[17px] pl-1 text-[10px] text-[#484644]">
      <span className="mr-auto">頁面 1 之 1</span>
      <button aria-label="縮小">-</button>
      <input
        type="range"
        aria-label="縮放"
        min={10}
        max={182}
        defaultValue={92}
        className="mx-[3px] h-[12px] w-[82px] appearance-none bg-transparent [&::-webkit-slider-runnable-track]:h-px [&::-webkit-slider-runnable-track]:bg-[#8a8886] [&::-webkit-slider-thumb]:-mt-1 [&::-webkit-slider-thumb]:h-[9px] [&::-webkit-slider-thumb]:w-1 [&::-webkit-slider-thumb]:appearance-none [&::-webkit-slider-thumb]:bg-[#605e5c]"
      />
      <button aria-label="放大" className="mr-[14px] ml-px">
        +
      </button>
      <span className="mr-[14px]">96%</span>
      <button aria-label="調整為整頁大小">
        <Svg w={13} h={11}>
          <path strokeWidth="1" d="M.5.5h12v10H.5z" />
          <path d="M3 4.500V3h1.500M8.500 3H10v1.500M10 6.500V8H8.500M4.500 8H3V6.500" />
        </Svg>
      </button>
    </footer>
  );
}

export default function App() {
  return (
    <div
      lang="zh-Hant"
      className="flex h-screen flex-col overflow-hidden border-r-2 border-l border-[#8a8886] bg-[#f3f2f1] font-['Noto_Sans','Noto_Sans_CJK_TC',sans-serif] text-[#252423]"
    >
      <TitleBar />
      <RibbonTabs />
      <Ribbon />
      <div className="flex min-h-0 flex-1">
        <Rail />
        <div className="flex min-w-0 flex-1 flex-col">
          <Canvas />
          <PageTabs />
        </div>
        <VisualPane />
        <FieldsPane />
      </div>
      <StatusBar />
    </div>
  );
}
